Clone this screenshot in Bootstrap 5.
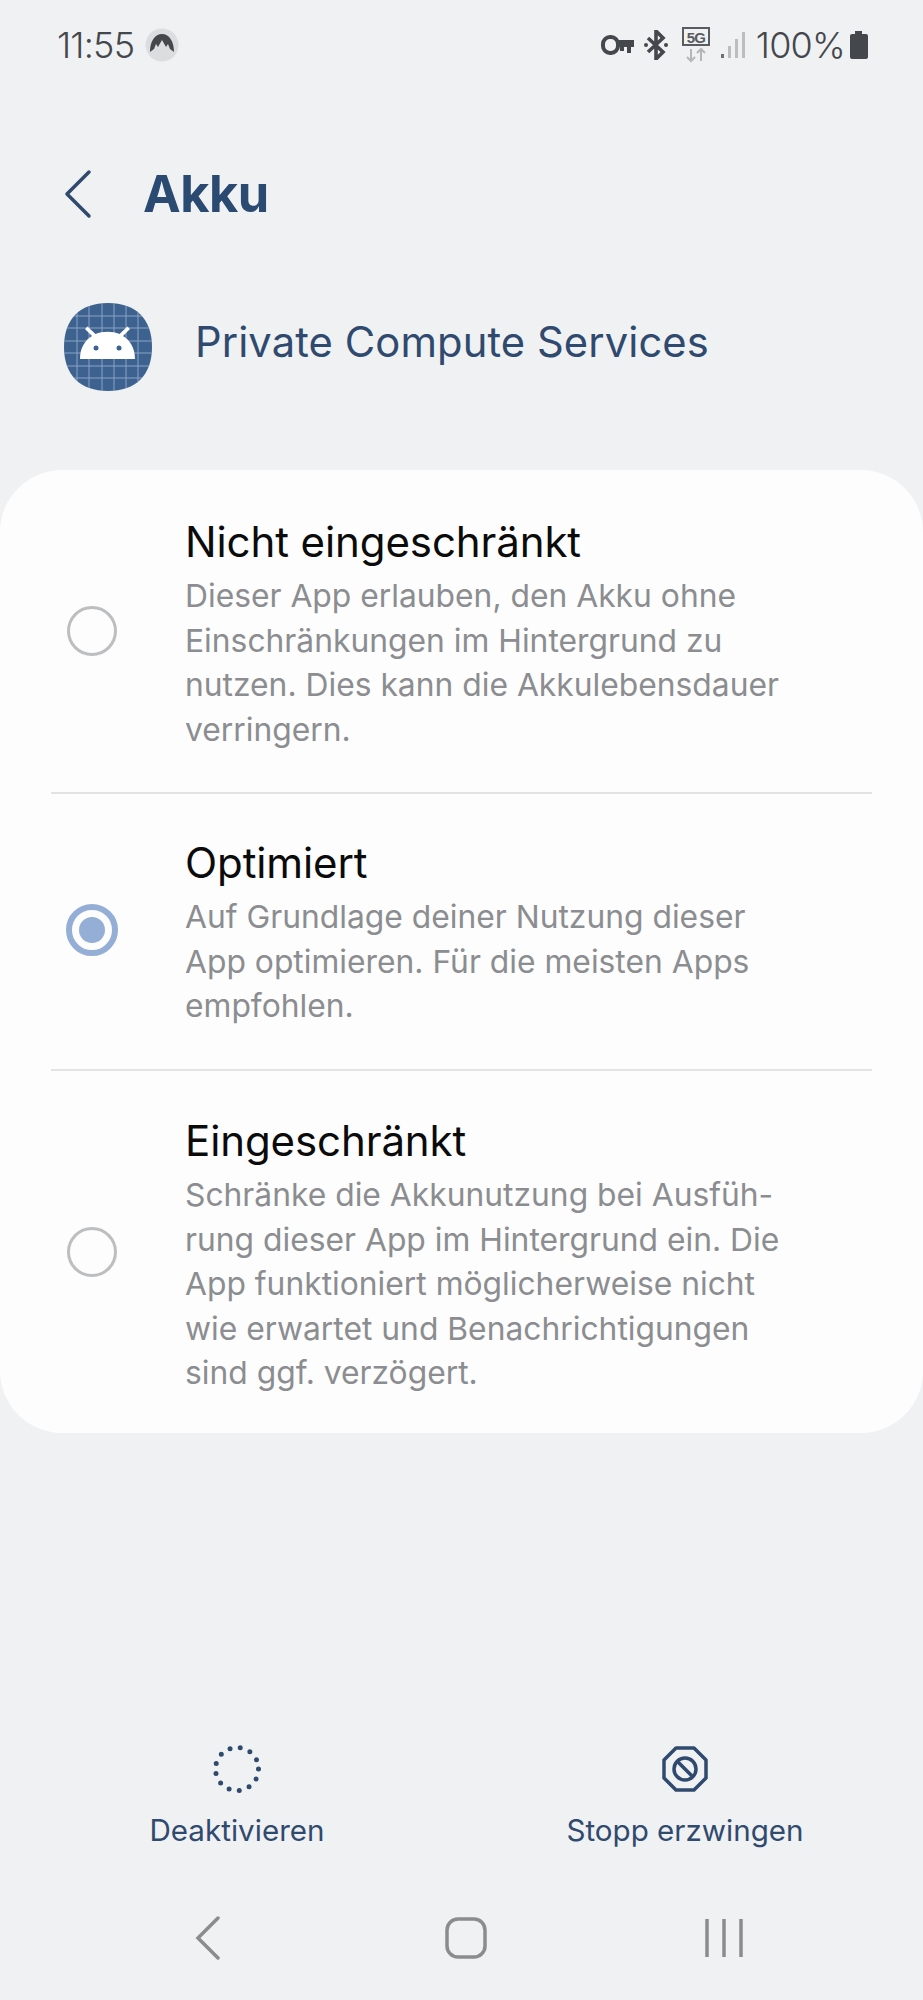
<!DOCTYPE html>
<html lang="de">
<head>
    <meta charset="UTF-8">
    <meta name="viewport" content="width=device-width, initial-scale=1.0">
    <title>Akku</title>
    <link href="https://cdn.jsdelivr.net/npm/bootstrap@5.3.0/dist/css/bootstrap.min.css" rel="stylesheet">
    <style>
        html, body { margin: 0; }
        body { width: 923px; height: 2000px; background: #f0f1f3; font-family: Inter, "Liberation Sans", sans-serif; overflow: hidden; }
        .screen { height: 2000px; }
        .status-row { height: 90px; padding: 0 54px 0 57px; color: #44474b; font-size: 36px; font-weight: 300; letter-spacing: -.8px; }
        .vpn-badge { margin-left: 3px; }
        .gap-bt { margin-left: 9px; }
        .gap-net { margin-left: 13px; }
        .gap-sig { margin-left: 10px; }
        .gap-pct { margin-left: 10px; }
        .title-row { height: 120px; margin-top: 44px; padding-left: 64px; }
        .page-title { font-size: 50.5px; font-weight: 700; color: #2b4a72; margin: 0 0 0 51px; line-height: 1; letter-spacing: -.5px; }
        .app-row { height: 88px; margin-top: 49px; padding-left: 64px; }
        .app-name { font-size: 41.7px; color: #2f4a6e; margin: 0 0 9px 43px; letter-spacing: .1px; }
        .option-card { margin-top: 79px; height: 963px; background: #fdfdfd; border-radius: 62px; padding: 0 51px; }
        .option-row { padding-left: 134px; position: relative; }
        .option-row + .option-row { border-top: 2px solid #e2e3e5; }
        .row-one { height: 322px; padding-top: 44px; }
        .row-two { height: 277px; padding-top: 41px; }
        .row-three { height: 364px; padding-top: 42px; }
        .option-title { font-size: 42px; line-height: 56px; margin-bottom: 4px; color: #0b0b0b; letter-spacing: -.1px; }
        .option-text { font-size: 31.8px; line-height: 44.6px; color: #8b8d90; white-space: nowrap; }
        .radio-mark { position: absolute; left: 16px; top: 50%; width: 50px; height: 50px; margin-top: -25px; border-radius: 50%; border: 3px solid #bdbec0; }
        .radio-on { border: 6px solid #94aed6; left: 15px; width: 52px; height: 52px; margin-top: -28px; }
        .radio-on::after { content: ""; position: absolute; left: 7px; top: 7px; width: 26px; height: 26px; border-radius: 50%; background: #94aed6; }
        .action-row { margin-top: 312px; padding: 0 58px 0 57px; color: #2f4a6e; font-size: 29.6px; }
        .action-item { width: 360px; gap: 15px; line-height: 45px; }
        .nav-row { margin-top: 62px; padding-left: 79px; }
        .nav-slot { width: 258px; height: 46px; }
    </style>
</head>
<body>
    <div class="screen d-flex flex-column">

        <!-- Status bar -->
        <div class="status-row d-flex align-items-center justify-content-between">
            <div class="d-flex align-items-center gap-2">
                <span>11:55</span>
                <svg class="vpn-badge" width="34" height="34" viewBox="0 0 34 34"><circle cx="17" cy="17" r="16.500" fill="#dcdddf"/><path d="M5 24C5 13 10 6 17 6s12 7 12 18l-4-3-2-5-2 3-4-7-4 7-2-3-2 5z" fill="#45474b"/></svg>
            </div>
            <div class="d-flex align-items-center">
                <svg width="33" height="22" viewBox="0 0 33 22"><rect x="2" y="3" width="15" height="16" rx="7" fill="none" stroke="#44474b" stroke-width="4"/><path d="M16 6h17v7h-3v6h-4v-6h-3v4h-4v-4h-3z" fill="#44474b"/></svg>
                <svg class="gap-bt" width="26" height="30" viewBox="0 0 26 30"><path d="M5 8l15 14-7 7V1l7 7L5 22" fill="none" stroke="#44474b" stroke-width="3.600"/><circle cx="3" cy="15" r="2" fill="#44474b"/><circle cx="23" cy="15" r="2" fill="#44474b"/></svg>
                <svg class="gap-net" width="28" height="36" viewBox="0 0 28 36"><rect x="1" y="1" width="26" height="17" fill="none" stroke="#5a5c60" stroke-width="2"/><text x="14" y="15.500" text-anchor="middle" font-family="Liberation Sans" font-weight="700" font-size="15" fill="#5a5c60">5G</text><path d="M9 22v12M5 30l4 4 4-4M19 34V22M15 26l4-4 4 4" fill="none" stroke="#b5b6b8" stroke-width="2"/></svg>
                <svg class="gap-sig" width="26" height="28" viewBox="0 0 26 28"><rect x="1" y="23" width="3" height="4" fill="#6d6f73"/><rect x="8" y="15" width="3" height="12" fill="#bcbdbf"/><rect x="15" y="8" width="3" height="19" fill="#bcbdbf"/><rect x="22" y="1" width="3" height="26" fill="#bcbdbf"/></svg>
                <span class="gap-pct">100%</span>
                <svg class="ms-1" width="20" height="28" viewBox="0 0 20 28"><path d="M6 0h7v3h4a2 2 0 0 1 2 2v21a2 2 0 0 1-2 2H3a2 2 0 0 1-2-2V5a2 2 0 0 1 2-2h3z" fill="#44474b"/></svg>
            </div>
        </div>

        <!-- Title -->
        <div class="title-row d-flex align-items-center">
            <svg width="28" height="50" viewBox="0 0 28 50"><path d="M25 3 3 25l22 22" fill="none" stroke="#2f4a6e" stroke-width="3.500" stroke-linecap="round" stroke-linejoin="round"/></svg>
            <h1 class="page-title">Akku</h1>
        </div>

        <!-- App -->
        <div class="app-row d-flex align-items-center">
            <svg width="88" height="88" viewBox="0 0 88 88">
                <defs><clipPath id="appShape"><path d="M44 0C72 0 88 16 88 44S72 88 44 88 0 72 0 44 16 0 44 0z"/></clipPath></defs>
                <g clip-path="url(#appShape)">
                    <rect width="88" height="88" fill="#3d6290"/>
                    <path d="M13 0v88M25 0v88M38 0v88M50 0v88M62 0v88M74 0v88M0 13h88M0 25h88M0 38h88M0 50h88M0 63h88M0 75h88" stroke="#8aa3c3" stroke-width="1" fill="none"/>
                </g>
                <path d="M16 56c0-11 5-19 12-23l-7-7 2.500-2.500 8 7.500c7-3 17-3 24 0l8-7.500 2.500 2.500-7 7c7 4 12 12 12 23z" fill="#fff"/>
                <circle cx="32" cy="45" r="2.500" fill="#3d6290"/><circle cx="55" cy="45" r="2.500" fill="#3d6290"/>
            </svg>
            <span class="app-name">Private Compute Services</span>
        </div>

        <!-- Options -->
        <div class="option-card">
            <div class="option-row row-one">
                <span class="radio-mark"></span>
                <div class="option-title">Nicht eingeschränkt</div>
                <div class="option-text">Dieser App erlauben, den Akku ohne<br>Einschränkungen im Hintergrund zu<br>nutzen. Dies kann die Akkulebensdauer<br>verringern.</div>
            </div>
            <div class="option-row row-two">
                <span class="radio-mark radio-on"></span>
                <div class="option-title">Optimiert</div>
                <div class="option-text">Auf Grundlage deiner Nutzung dieser<br>App optimieren. Für die meisten Apps<br>empfohlen.</div>
            </div>
            <div class="option-row row-three">
                <span class="radio-mark"></span>
                <div class="option-title">Eingeschränkt</div>
                <div class="option-text">Schränke die Akkunutzung bei Ausfüh-<br>rung dieser App im Hintergrund ein. Die<br>App funktioniert möglicherweise nicht<br>wie erwartet und Benachrichtigungen<br>sind ggf. verzögert.</div>
            </div>
        </div>

        <!-- Actions -->
        <div class="action-row d-flex justify-content-between">
            <div class="action-item d-flex flex-column align-items-center">
                <svg width="48" height="48" viewBox="0 0 48 48"><circle cx="24" cy="24" r="21.500" fill="none" stroke="#2f4a6e" stroke-width="5" stroke-linecap="round" stroke-dasharray="0 10.400"/></svg>
                <span>Deaktivieren</span>
            </div>
            <div class="action-item d-flex flex-column align-items-center">
                <svg width="48" height="48" viewBox="0 0 48 48"><path d="M15 3h18l12 12v18L33 45H15L3 33V15z" fill="none" stroke="#2f4a6e" stroke-width="3.500" stroke-linejoin="round"/><circle cx="24" cy="24" r="11" fill="none" stroke="#2f4a6e" stroke-width="3.500"/><path d="M17 17l14 14" stroke="#2f4a6e" stroke-width="3.500"/></svg>
                <span>Stopp erzwingen</span>
            </div>
        </div>

        <!-- Nav bar -->
        <div class="nav-row d-flex">
            <div class="nav-slot d-flex align-items-center justify-content-center">
                <svg width="26" height="44" viewBox="0 0 26 44"><path d="M23 2 3 22l20 20" fill="none" stroke="#8b8c8e" stroke-width="3.500" stroke-linecap="round"/></svg>
            </div>
            <div class="nav-slot d-flex align-items-center justify-content-center">
                <svg width="42" height="42" viewBox="0 0 42 42"><rect x="2" y="2" width="38" height="38" rx="11" fill="none" stroke="#8b8c8e" stroke-width="3.500"/></svg>
            </div>
            <div class="nav-slot d-flex align-items-center justify-content-center">
                <svg width="40" height="40" viewBox="0 0 40 40"><path d="M3 1v38M20 1v38M37 1v38" stroke="#8b8c8e" stroke-width="3.500"/></svg>
            </div>
        </div>
    </div>
</body>
</html>
